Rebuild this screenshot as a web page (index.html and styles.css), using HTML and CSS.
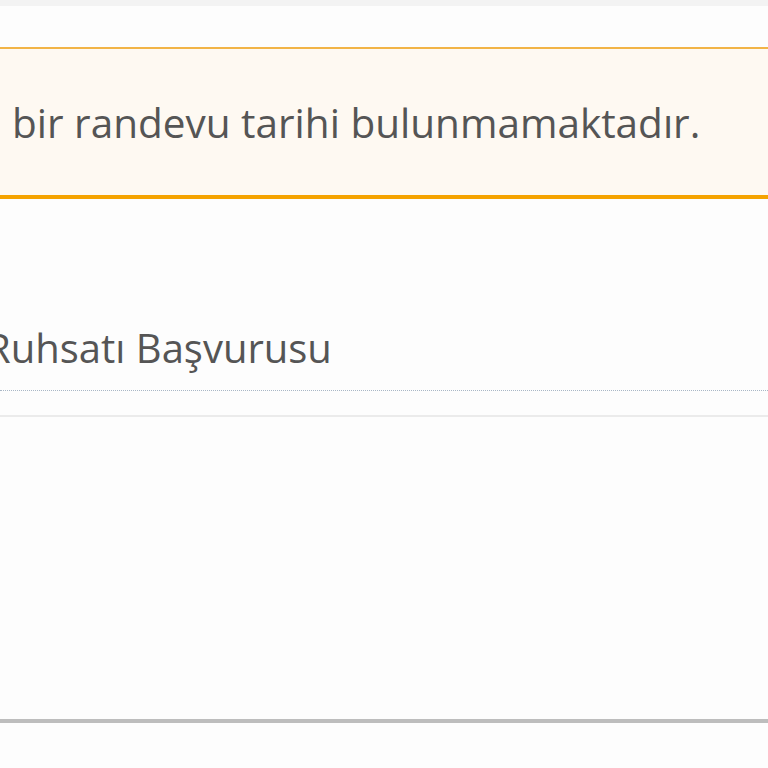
FILE: index.html
```html
<!DOCTYPE html>
<html lang="tr">
<head>
    <meta charset="UTF-8">
    <title>Randevu</title>
    <link rel="stylesheet" href="styles.css">
</head>
<body>
    <div class="top-strip"></div>

    <main class="content">
        <!-- Uyarı kutusu -->
        <div class="alert-warning">
            <p>bir randevu tarihi bulunmamaktadır.</p>
        </div>

        <!-- Başvuru başlığı -->
        <div class="panel">
            <h2 class="panel-title">Ruhsatı Başvurusu</h2>
            <div class="panel-body"></div>
        </div>
    </main>
</body>
</html>
```

FILE: styles.css
```css
body {
    margin: 0;
    background-color: #fdfdfd;
    font-family: "Open Sans", "Noto Sans", sans-serif;
    color: #555;
    overflow: hidden;
    height: 768px;
}

.top-strip {
    height: 6px;
    background-color: #f3f3f3;
}

.content {
    padding-top: 41px;
}

/* Uyarı kutusu */
.alert-warning {
    background-color: #fef9f2;
    border-top: 2px solid #f2b447;
    border-bottom: 4px solid #f5a300;
    height: 146px;
    display: flex;
    align-items: center;
    padding-left: 12px;
}

.alert-warning p {
    margin: 0;
    font-size: 40.5px;
    white-space: nowrap;
}

/* Panel */
.panel {
    margin-top: 121px;
    border-bottom: 4px solid #bdbdbd;
}

.panel-title {
    margin: 0;
    font-size: 40px;
    font-weight: normal;
    white-space: nowrap;
    text-indent: -14px;
    padding-bottom: 15px;
    border-bottom: 1px dotted #a9b7c6;
}

.panel-body {
    border-top: 2px solid #ebebeb;
    margin-top: 24px;
    height: 302px;
}
```
